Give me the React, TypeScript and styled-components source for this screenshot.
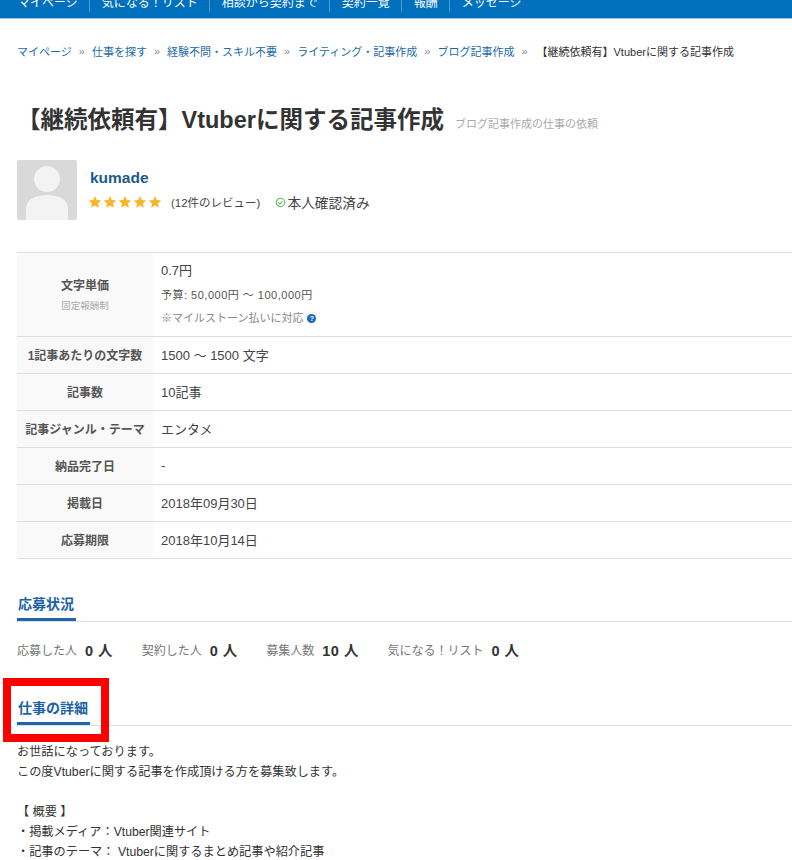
import styled, { createGlobalStyle } from 'styled-components';

const FONT = `"Liberation Sans", "Noto Sans CJK JP", sans-serif`;

const GlobalStyle = createGlobalStyle`
  html, body {
    margin: 0;
    padding: 0;
    background: #fff;
    overflow: hidden;
  }
  body {
    font-family: ${FONT};
    color: #333;
    font-size: 12px;
  }
`;

const navItems = ['マイページ', '気になる！リスト', '相談から契約まで', '契約一覧', '報酬', 'メッセージ'];
const crumbs = ['マイページ', '仕事を探す', '経験不問・スキル不要', 'ライティング・記事作成', 'ブログ記事作成'];

const rows = [
  { label: '1記事あたりの文字数', value: '1500 ～ 1500 文字' },
  { label: '記事数', value: '10記事' },
  { label: '記事ジャンル・テーマ', value: 'エンタメ' },
  { label: '納品完了日', value: '-' },
  { label: '掲載日', value: '2018年09月30日' },
  { label: '応募期限', value: '2018年10月14日' },
];

const stats = [
  { label: '応募した人', count: '0' },
  { label: '契約した人', count: '0' },
  { label: '募集人数', count: '10' },
  { label: '気になる！リスト', count: '0' },
];

const Star = () => (
  <svg width="14" height="14" viewBox="0 0 24 24" fill="#fbb72c">
    <path d="M12 1.5l3.2 7 7.6.8-5.7 5.1 1.6 7.5L12 18.1l-6.7 3.8 1.6-7.5L1.2 9.3l7.6-.8z" />
  </svg>
);

const App = () => {
  return (
    <>
      <GlobalStyle />
      <Nav>
        {navItems.map((item) => (
          <NavItem key={item}>{item}</NavItem>
        ))}
      </Nav>
      <Page>
        <Breadcrumb>
          {crumbs.map((c) => (
            <Crumb key={c}>
              <CrumbLink>{c}</CrumbLink>
              <CrumbSep>»</CrumbSep>
            </Crumb>
          ))}
          <CrumbCurrent>【継続依頼有】Vtuberに関する記事作成</CrumbCurrent>
        </Breadcrumb>

        <TitleRow>
          <Title>【継続依頼有】Vtuberに関する記事作成</Title>
          <SubTitle>ブログ記事作成の仕事の依頼</SubTitle>
        </TitleRow>

        <Client>
          <Avatar>
            <svg width="60" height="60" viewBox="0 0 60 60">
              <circle cx="30" cy="19" r="13" fill="#f3f3f3" />
              <path d="M9 60V48c0-8 9-13 21-13s21 5 21 13v12z" fill="#f3f3f3" />
            </svg>
          </Avatar>
          <ClientInfo>
            <ClientName>kumade</ClientName>
            <ClientMeta>
              <Stars>
                {[0, 1, 2, 3, 4].map((i) => (
                  <Star key={i} />
                ))}
              </Stars>
              <Reviews>(12件のレビュー)</Reviews>
              <Verified>
                <svg width="11" height="11" viewBox="0 0 12 12" fill="none" stroke="#5cb85c" strokeWidth="1.2">
                  <circle cx="6" cy="6" r="4.6" />
                  <path d="M3.8 6l1.6 1.6 2.8-2.8" />
                </svg>
                本人確認済み
              </Verified>
            </ClientMeta>
          </ClientInfo>
        </Client>

        <InfoTable>
          <tbody>
            <tr>
              <Th $tall>
                文字単価
                <ThNote>固定報酬制</ThNote>
              </Th>
              <Td>
                <PriceLine>0.7円</PriceLine>
                <BudgetLine>予算: 50,000円 ～ 100,000円</BudgetLine>
                <MilestoneLine>
                  ※マイルストーン払いに対応
                  <HelpIcon>?</HelpIcon>
                </MilestoneLine>
              </Td>
            </tr>
            {rows.map((row) => (
              <tr key={row.label}>
                <Th>{row.label}</Th>
                <Td>{row.value}</Td>
              </tr>
            ))}
          </tbody>
        </InfoTable>

        <SectionHead $first>
          <SectionTitle>応募状況</SectionTitle>
        </SectionHead>
        <Stats>
          {stats.map((s) => (
            <Stat key={s.label}>
              {s.label}
              <StatCount>{s.count} 人</StatCount>
            </Stat>
          ))}
        </Stats>

        <SectionHead>
          <HighlightBox />
          <SectionTitle>仕事の詳細</SectionTitle>
        </SectionHead>
        <Detail>
          <p>お世話になっております。</p>
          <p>この度Vtuberに関する記事を作成頂ける方を募集致します。</p>
          <p>&nbsp;</p>
          <p>【 概要 】</p>
          <p>・掲載メディア：Vtuber関連サイト</p>
          <p>・記事のテーマ： Vtuberに関するまとめ記事や紹介記事</p>
        </Detail>
      </Page>
    </>
  );
};

export default App;

const Nav = styled.nav`
  display: flex;
  align-items: flex-end;
  height: 12px;
  overflow: hidden;
  background: #0070bd;
  border-bottom: 1px solid #9cc7e6;
  padding: 0 0 6px 6px;
`;

const NavItem = styled.div`
  flex: none;
  padding: 0 11px 0 12px;
  line-height: 18px;
  font-size: 12px;
  color: #fff;
  border-right: 1px solid #4d9bd1;

  &:last-child {
    border-right: none;
  }
`;

const Page = styled.main`
  padding: 0 0 0 17px;
  height: 841px;
  overflow: hidden;
`;

const Breadcrumb = styled.div`
  display: flex;
  align-items: center;
  height: 16px;
  margin-top: 24px;
  font-size: 11px;
  white-space: nowrap;
`;

const Crumb = styled.span`
  display: inline-flex;
  align-items: center;
`;

const CrumbLink = styled.span`
  color: #1a6aa8;
`;

const CrumbSep = styled.span`
  color: #888;
  margin: 0 7px;
`;

const CrumbCurrent = styled.span`
  color: #333;
  margin-left: 2px;
  font-size: 11px;
`;

const TitleRow = styled.div`
  display: flex;
  align-items: baseline;
  margin-top: 44px;
  height: 34px;
`;

const Title = styled.h1`
  margin: 0;
  font-size: 23.5px;
  font-weight: 700;
  line-height: 34px;
  color: #333;
  white-space: nowrap;
`;

const SubTitle = styled.span`
  margin-left: 11px;
  font-size: 11px;
  color: #aaa;
`;

const Client = styled.div`
  display: flex;
  margin-top: 23px;
`;

const Avatar = styled.div`
  width: 60px;
  height: 60px;
  background: #d9d9d9;
  border-radius: 2px;
  overflow: hidden;
  flex: none;
`;

const ClientInfo = styled.div`
  margin-left: 13px;
  padding-top: 8px;
`;

const ClientName = styled.div`
  font-size: 15.5px;
  font-weight: 700;
  line-height: 20px;
  color: #1c5a8c;
`;

const ClientMeta = styled.div`
  display: flex;
  align-items: center;
  margin-top: 4px;
  height: 20px;
  margin-left: -2px;
`;

const Stars = styled.span`
  display: inline-flex;
  gap: 1px;
`;

const Reviews = styled.span`
  font-size: 11.5px;
  color: #444;
  margin-left: 9px;
`;

const Verified = styled.span`
  display: inline-flex;
  align-items: center;
  font-size: 13.7px;
  color: #444;
  margin-left: 15px;
  gap: 1px;
`;

const InfoTable = styled.table`
  width: 775px;
  margin-top: 32px;
  border-collapse: collapse;
  border-top: 1px solid #ddd;
  font-size: 12px;
`;

const Th = styled.th<{ $tall?: boolean }>`
  width: 136px;
  height: ${(props) => (props.$tall ? '84px' : '37px')};
  padding: 0 0 2px;
  box-sizing: border-box;
  background: #f9f9f9;
  border-bottom: 1px solid #ddd;
  text-align: center;
  font-weight: 700;
  font-size: 12px;
  color: #555;
  white-space: nowrap;
`;

const ThNote = styled.div`
  font-size: 9.5px;
  font-weight: 400;
  color: #aaa;
  margin-top: 5px;
`;

const Td = styled.td`
  padding: 0 0 2px 8px;
  border-bottom: 1px solid #ddd;
  font-size: 13px;
  color: #444;
`;

const PriceLine = styled.div`
  line-height: 18px;
  margin-top: 2px;
`;

const BudgetLine = styled.div`
  font-size: 11px;
  line-height: 18px;
  margin-top: 6px;
  color: #555;
  letter-spacing: 0.5px;
`;

const MilestoneLine = styled.div`
  display: flex;
  align-items: center;
  font-size: 11px;
  line-height: 18px;
  margin-top: 5px;
  color: #888;
`;

const HelpIcon = styled.span`
  width: 9px;
  height: 9px;
  border-radius: 50%;
  background: #1a6ab5;
  color: #fff;
  font-size: 7px;
  font-weight: 700;
  line-height: 9px;
  text-align: center;
  margin-left: 4px;
`;

const SectionHead = styled.div<{ $first?: boolean }>`
  position: relative;
  border-bottom: 1px solid #ddd;
  margin-top: ${(props) => (props.$first ? '34px' : '39px')};
  height: 28px;
  display: flex;
`;

const SectionTitle = styled.h2`
  margin: 0;
  padding: 0 2px 0 1px;
  height: 28px;
  box-sizing: border-box;
  font-size: 14px;
  font-weight: 700;
  line-height: 22px;
  color: #1c62a6;
  border-bottom: 3px solid #1c68b0;
`;

// red annotation frame drawn over the heading
const HighlightBox = styled.div`
  position: absolute;
  left: -14px;
  top: -19px;
  width: 90px;
  height: 48px;
  border: 8px solid #f00;
`;

const Stats = styled.div`
  display: flex;
  gap: 28.5px;
  margin-top: 18px;
  height: 18px;
  align-items: center;
`;

const Stat = styled.div`
  display: flex;
  align-items: center;
  font-size: 12px;
  color: #777;
`;

const StatCount = styled.span`
  margin-left: 8px;
  font-size: 14.5px;
  font-weight: 700;
  color: #333;
  letter-spacing: 0.5px;
`;

const Detail = styled.div`
  margin-top: 16px;
  font-size: 12.2px;
  line-height: 20px;
  color: #333;

  p {
    margin: 0;
  }
`;
